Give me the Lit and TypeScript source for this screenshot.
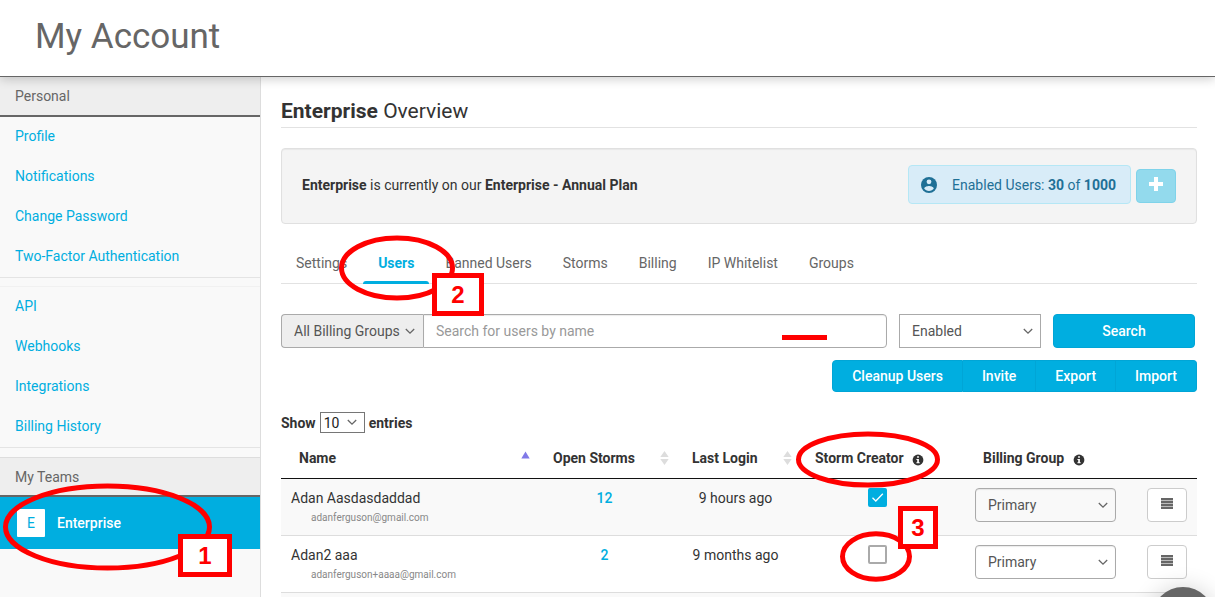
import { LitElement, html, css, svg, nothing } from 'lit';
import { customElement, property } from 'lit/decorators.js';
import { classMap } from 'lit/directives/class-map.js';

interface User {
  name: string;
  email: string;
  storms: number;
  login: string;
  creator: boolean;
}

const PERSONAL = ['Profile', 'Notifications', 'Change Password', 'Two-Factor Authentication'];
const ACCOUNT = ['API', 'Webhooks', 'Integrations', 'Billing History'];
const TABS = ['Settings', 'Users', 'Banned Users', 'Storms', 'Billing', 'IP Whitelist', 'Groups'];
const ACTIONS = ['Cleanup Users', 'Invite', 'Export', 'Import'];
const USERS: User[] = [
  { name: 'Adan Aasdasdaddad', email: 'adanferguson@gmail.com', storms: 12, login: '9 hours ago', creator: true },
  { name: 'Adan2 aaa', email: 'adanferguson+aaaa@gmail.com', storms: 2, login: '9 months ago', creator: false },
];

const infoIcon = html`<svg class="info" viewBox="0 0 12 12" width="12" height="12" aria-hidden="true">
  <circle cx="6" cy="6" r="5.4" fill="#333" />
  <path d="M5.1 2.3h1.8v1.5H5.1zM4.4 4.9h2.5v3.4h.8v1H4.4v-1h.8V5.9h-.8z" fill="#fff" />
</svg>`;

const sortIcon = html`<svg viewBox="0 0 9 16" width="9" height="16" aria-hidden="true">
  <path d="M4.5 1l4.2 6H.3zM4.5 15l4.2-6H.3z" fill="#ddd" />
</svg>`;

const sortUpIcon = html`<svg viewBox="0 0 9 16" width="9" height="16" aria-hidden="true">
  <path d="M4.5 1.500l4.200 7H.3z" fill="#8079e8" />
</svg>`;

@customElement('drop-down')
class DropDown extends LitElement {
  @property() label = '';
  @property() value = '';
  @property() kind = '';

  static styles = css`
    :host { display: block; }
    .wrap { display: grid; align-items: center; }
    select, svg { grid-area: 1 / 1; }
    svg { justify-self: end; margin-right: 8px; pointer-events: none; }
    select {
      appearance: none;
      box-sizing: border-box;
      width: 100%;
      height: 34px;
      margin: 0;
      padding: 0 12px;
      border: 1px solid #aaa;
      border-radius: 0;
      background: #fff;
      color: #555;
      font: 14px/20px Roboto, sans-serif;
    }
    .addon { background: #eee; border-radius: 4px 0 0 4px; border-right: 0; }
    .round { background: transparent; border-radius: 4px; box-shadow: inset 0 1px 1px rgba(0, 0, 0, 0.08); }
    .small { height: 21px; padding: 0 3px; border-color: #767676; color: #222; }
  `;

  render() {
    return html`<span class="wrap">
      <select class=${this.kind} aria-label=${this.label}><option>${this.value}</option></select>
      <svg viewBox="0 0 10 7" width="10" height="7"><path d="M.8 1l4.200 4.200L9.200 1" fill="none" stroke="#666" stroke-width="1.300" /></svg>
    </span>`;
  }
}

@customElement('side-nav')
class SideNav extends LitElement {
  static styles = css`
    :host { display: block; background: #f9f9f9; border-right: 1px solid #ddd; font-size: 14px; }
    h2 {
      box-sizing: border-box;
      height: 40px;
      margin: 0;
      padding: 0 15px;
      border-bottom: 2px solid #666;
      background: #eee;
      color: #666;
      font-size: 14px;
      font-weight: 400;
      line-height: 39px;
    }
    .teams { border-top: 1px solid #ddd; }
    a { display: block; padding: 0 15px 2px; color: #00aee0; line-height: 38px; text-decoration: none; }
    hr { box-sizing: border-box; height: 10px; margin: 0; border: solid #e4e4e4; border-width: 1px 0 0; }
    .faint { border-bottom: 1px solid #f1f1f1; }
    .team { display: flex; align-items: center; gap: 12px; padding: 12px 17px; background: #00aee0; color: #fff; font-weight: 500; line-height: 28px; }
    .avatar { width: 28px; border-radius: 1px; background: #fff; color: #00aee0; font-weight: 400; text-align: center; }
  `;

  render() {
    const link = (t: string) => html`<a href="#">${t}</a>`;
    return html`<nav>
      <h2>Personal</h2>
      ${PERSONAL.map(link)}
      <hr class="faint" />
      ${ACCOUNT.map(link)}
      <hr />
      <h2 class="teams">My Teams</h2>
      <a class="team" href="#"><span class="avatar">E</span>Enterprise</a>
    </nav>`;
  }
}

@customElement('user-table')
class UserTable extends LitElement {
  static styles = css`
    :host { display: block; }
    table { width: 100%; border-collapse: separate; border-spacing: 0; table-layout: fixed; font-size: 14px; line-height: 20px; }
    th { box-sizing: border-box; padding: 12px 5px 10px 18px; border-bottom: 1px solid #111; text-align: left; font-weight: 700; white-space: nowrap; }
    .head { display: flex; align-items: center; justify-content: space-between; }
    .info { margin-left: 5px; vertical-align: -3px; }
    .storms { width: 139px; }
    .login { width: 123px; }
    .creator { width: 168px; }
    .group { width: 172px; }
    .menu { width: 60px; }
    td { height: 57px; box-sizing: border-box; padding: 9px 10px 0; border-bottom: 1px solid #ddd; vertical-align: top; }
    tbody tr:nth-child(odd) { background: #f9f9f9; }
    .email { padding-left: 20px; color: #888; font-size: 10px; }
    .center { text-align: center; }
    .tick { padding-right: 17px; line-height: 0; }
    .num { color: #00aee0; font-weight: 500; text-decoration: none; }
    .check { display: inline-grid; }
    .check input, .check svg { grid-area: 1 / 1; }
    input {
      appearance: none;
      box-sizing: border-box;
      width: 19px;
      height: 19px;
      margin: 0;
      border: 2px solid #aaa;
      border-radius: 2px;
      background: #fff;
    }
    input:checked { border-color: #00aee0; background: #00aee0; }
    svg { pointer-events: none; }
    .pick { width: 141px; }
    .row-menu {
      box-sizing: border-box;
      display: grid;
      place-items: center;
      width: 40px;
      height: 34px;
      padding: 0 0 4px;
      border: 1px solid #ccc;
      border-radius: 4px;
      background: #fff;
    }
  `;

  render() {
    return html`<table>
      <thead>
        <tr>
          <th><span class="head">Name ${sortUpIcon}</span></th>
          <th class="storms"><span class="head">Open Storms ${sortIcon}</span></th>
          <th class="login"><span class="head">Last Login ${sortIcon}</span></th>
          <th class="creator">Storm Creator ${infoIcon}</th>
          <th class="group">Billing Group ${infoIcon}</th>
          <th class="menu" aria-label="Actions"></th>
        </tr>
      </thead>
      <tbody>
        ${USERS.map(u => html`<tr>
          <td>${u.name}<div class="email">${u.email}</div></td>
          <td class="center"><a class="num" href="#">${u.storms}</a></td>
          <td class="center">${u.login}</td>
          <td class="center tick">
            <label class="check">
              <input type="checkbox" aria-label="Storm creator: ${u.name}" .checked=${u.creator} />
              ${u.creator ? html`<svg viewBox="0 0 19 19" width="19" height="19"><path d="M4.500 9.800l3.300 3.200 7-7.200" fill="none" stroke="#fff" stroke-width="1.300" /></svg>` : nothing}
            </label>
          </td>
          <td><drop-down class="pick" kind="round" label="Billing group" value="Primary"></drop-down></td>
          <td>
            <button class="row-menu" aria-label="Menu for ${u.name}">
              <svg viewBox="0 0 12 11" width="12" height="11">
                <path d="M0 0h12v11H0z" fill="#bbb" />
                <path d="M0 0h12v2H0zM0 3h12v2H0zM0 6h12v2H0zM0 9h12v2H0z" fill="#666" />
              </svg>
            </button>
          </td>
        </tr>`)}
        <tr><td colspan="6"></td></tr>
      </tbody>
    </table>`;
  }
}

@customElement('callout-layer')
class CalloutLayer extends LitElement {
  static styles = css`
    :host { position: absolute; inset: 0; z-index: 5; overflow: hidden; pointer-events: none; }
    svg { position: absolute; top: 0; left: 0; width: 100%; height: 100%; }
    .tag {
      position: absolute;
      box-sizing: border-box;
      height: 43px;
      border: 5px solid #f00;
      background: #fff;
      color: #f00;
      font: bold 24px/33px "Liberation Sans", Arial, sans-serif;
      text-align: center;
    }
    .one { left: 178px; top: 534px; width: 54px; }
    .two { left: 432px; top: 273px; width: 52px; }
    .three { left: 898px; top: 506px; width: 40px; }
  `;

  render() {
    const rings = [[107.5, 527, 102, 41], [397, 268, 55.5, 30], [868, 459.5, 69.5, 25.5], [876, 556.5, 33.5, 22.7]];
    return html`
      <svg fill="none" stroke="#f00" stroke-width="5">
        ${rings.map(([x, y, rx, ry]) => svg`<ellipse cx=${x} cy=${y} rx=${rx} ry=${ry} />`)}
        <path d="M782 337.500h45" />
      </svg>
      <div class="tag one">1</div>
      <div class="tag two">2</div>
      <div class="tag three">3</div>`;
  }
}

@customElement('app-root')
class AppRoot extends LitElement {
  static styles = css`
    :host {
      position: relative;
      display: flex;
      flex-direction: column;
      height: 100vh;
      overflow: hidden;
      background: #fff;
      color: #333;
      font: 14px/20px Roboto, sans-serif;
    }
    header { position: relative; z-index: 1; padding: 17px 35px 19px; border-bottom: 1px solid #666; background: #fff; box-shadow: 0 2px 10px rgba(0, 0, 0, 0.2); }
    h1 { margin: 0; color: #666; font-size: 35px; font-weight: 400; line-height: 40px; }
    .body { display: grid; grid-template-columns: 261px minmax(0, 1fr); flex: 1; min-height: 0; }
    main { padding: 20px 18px 0 20px; }
    h2 { margin: 0 0 20px; padding-bottom: 2px; border-bottom: 1px solid #e2e2e2; font-size: 21px; font-weight: 400; line-height: 28px; }
    .plan {
      display: flex;
      align-items: center;
      gap: 5px;
      margin-bottom: 20px;
      padding: 16px 20px 19px;
      border: 1px solid #e0e0e0;
      border-radius: 4px;
      background: #f4f4f4;
      box-shadow: inset 0 1px 1px rgba(0, 0, 0, 0.05);
    }
    .plan p { flex: 1; margin: 0; }
    .seats {
      display: flex;
      align-items: center;
      gap: 15px;
      padding: 9px 14px 8px 12px;
      border: 1px solid #b5e7f5;
      border-radius: 4px;
      background: #d8ecf8;
      color: #1f7096;
    }
    .add { display: grid; place-items: center; box-sizing: border-box; width: 40px; height: 34px; margin-top: 2px; padding: 0 0 4px; border: 1px solid #7fd3ea; border-radius: 4px; background: #93daed; }
    .tabs { display: flex; gap: 1px; margin-bottom: 30px; border-bottom: 1px solid #e2e2e2; }
    .tab { padding: 9px 15px 8px; border-bottom: 3px solid transparent; margin-bottom: -1px; color: #666; text-decoration: none; }
    .tab-bar { height: 3px; margin: 8px -15px -11px; border-radius: 3px 3px 0 0; background: #00aee0; }
    .active { color: #00aee0; font-weight: 700; }
    .filters { display: grid; grid-template-columns: minmax(0, 1fr) 142px 142px; gap: 12px; padding-right: 2px; margin-bottom: 12px; }
    .search { display: grid; grid-template-columns: 142px minmax(0, 1fr); }
    input {
      box-sizing: border-box;
      width: 100%;
      height: 34px;
      padding: 0 12px;
      border: 1px solid #aaa;
      border-radius: 0 4px 4px 0;
      box-shadow: inset 0 1px 1px rgba(0, 0, 0, 0.08);
      background: #fff;
      font: 14px/20px Roboto, sans-serif;
    }
    input::placeholder { color: #999; opacity: 1; }
    .primary { border: 1px solid #00a5d6; background: #00aee0; color: #fff; font: 500 14px/20px Roboto, sans-serif; }
    .go { border-radius: 4px; }
    .actions { display: flex; justify-content: flex-end; margin-bottom: 20px; }
    .actions button { height: 32px; padding: 0 19px; border-left-width: 0; }
    .actions button:first-child { border-left-width: 1px; border-radius: 4px 0 0 4px; }
    .actions button:last-child { border-radius: 0 4px 4px 0; }
    .show { display: flex; align-items: center; gap: 4px; margin-bottom: 3px; font-weight: 700; }
    .count { width: 45px; }
    .chat {
      position: absolute;
      right: 1px;
      bottom: -52px;
      width: 62px;
      height: 62px;
      padding: 0;
      border: 0;
      border-radius: 50%;
      background: #666;
      box-shadow: 0 2px 24px rgba(0, 0, 0, 0.2);
    }
  `;

  render() {
    return html`
      <header><h1>My Account</h1></header>
      <div class="body">
        <side-nav></side-nav>
        <main>
          <h2><b>Enterprise</b> Overview</h2>
          <section class="plan">
            <p><b>Enterprise</b> is currently on our <b>Enterprise - Annual Plan</b></p>
            <div class="seats">
              <svg viewBox="0 0 16 16" width="16" height="16" aria-hidden="true">
                <circle cx="8" cy="8" r="8" fill="#1f7096" />
                <circle cx="8" cy="4.800" r="2.400" fill="#d8ecf8" />
                <path d="M3.200 11.400c0-1.600 3.200-2.500 4.800-2.500s4.800.9 4.800 2.500c-1 1.500-2.800 2.500-4.800 2.500s-3.800-1-4.800-2.500z" fill="#d8ecf8" />
              </svg>
              <span>Enabled Users: <b>30</b> of <b>1000</b></span>
            </div>
            <button class="add" aria-label="Add users">
              <svg viewBox="0 0 14 14" width="14" height="14"><path d="M5 0h4v5h5v4H9v5H5V9H0V5h5z" fill="#fff" /></svg>
            </button>
          </section>
          <nav class="tabs">
            ${TABS.map((t, i) => html`<a href="#" class=${classMap({ tab: true, active: i === 1 })}>${t}${i === 1 ? html`<div class="tab-bar"></div>` : nothing}</a>`)}
          </nav>
          <div class="filters">
            <div class="search">
              <drop-down kind="addon" label="Billing group filter" value="All Billing Groups"></drop-down>
              <input type="text" aria-label="Search for users" placeholder="Search for users by name" />
            </div>
            <drop-down label="Status" value="Enabled"></drop-down>
            <button class="primary go">Search</button>
          </div>
          <div class="actions">${ACTIONS.map(a => html`<button class="primary">${a}</button>`)}</div>
          <div class="show">Show <drop-down class="count" kind="small" label="Entries shown" value="10"></drop-down> entries</div>
          <user-table></user-table>
        </main>
      </div>
      <button class="chat" aria-label="Open chat"></button>
      <callout-layer></callout-layer>`;
  }
}
